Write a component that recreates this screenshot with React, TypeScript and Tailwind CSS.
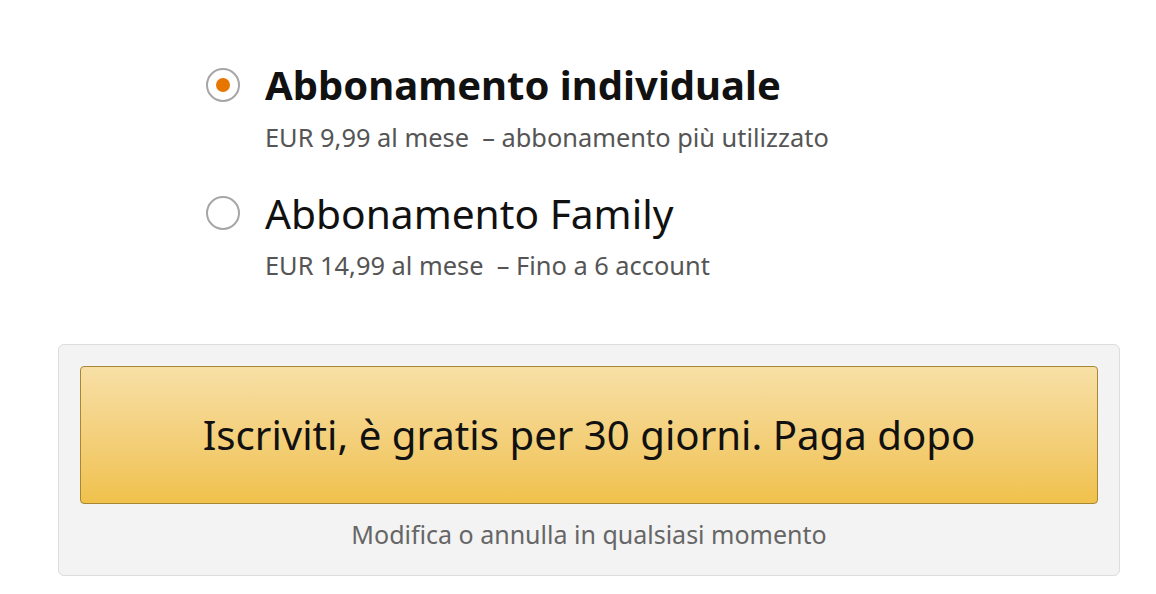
import React from "react";

function Radio({ checked }: { checked: boolean }) {
  return (
    <div className="w-[34px] h-[34px] rounded-full border-2 border-[#a6a6a6] bg-white flex items-center justify-center shrink-0">
      {checked && <div className="w-[14px] h-[14px] rounded-full bg-[#e77600]" />}
    </div>
  );
}

export default function App() {
  return (
    <div className="w-[1156px] h-[594px] bg-white font-['Noto_Sans',sans-serif] relative">
      <div className="pt-[60px] pl-[206px] flex flex-col">
        <div className="flex items-start gap-[25px]">
          <div className="mt-[8px]"><Radio checked /></div>
          <div className="flex flex-col">
            <div className="text-[40px] leading-[50px] font-bold text-[#111]">Abbonamento individuale</div>
            <div className="text-[25.4px] leading-[30px] text-[#555] mt-[12px] whitespace-pre">EUR 9,99 al mese  – abbonamento più utilizzato</div>
          </div>
        </div>
        <div className="flex items-start gap-[25px] mt-[36px]">
          <div className="mt-[8px]"><Radio checked={false} /></div>
          <div className="flex flex-col">
            <div className="text-[40.7px] leading-[50px] text-[#111]">Abbonamento Family</div>
            <div className="text-[25.4px] leading-[30px] text-[#555] mt-[12px] whitespace-pre">EUR 14,99 al mese  – Fino a 6 account</div>
          </div>
        </div>
      </div>
      <div className="absolute left-[58px] top-[344px] w-[1062px] h-[232px] bg-[#f3f3f3] border border-[#dddddd] rounded-[6px] px-[21px] pt-[21px] flex flex-col">
        <button className="w-full h-[138px] rounded-[4px] border border-[#a88734] bg-gradient-to-b from-[#f7dfa5] to-[#f0c14b] text-[40.2px] text-[#111] flex items-center justify-center">
          Iscriviti, è gratis per 30 giorni. Paga dopo
        </button>
        <div className="text-center text-[25px] text-[#666] mt-[12px]">Modifica o annulla in qualsiasi momento</div>
      </div>
    </div>
  );
}
